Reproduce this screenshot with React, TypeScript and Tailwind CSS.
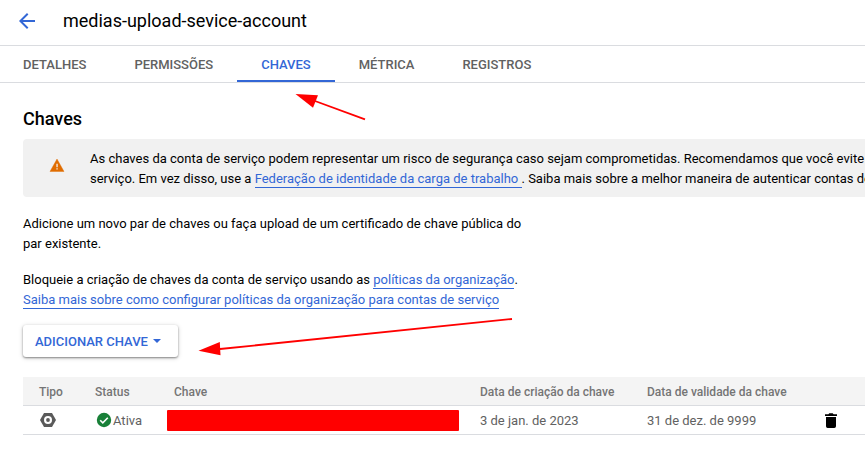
import type { ReactNode } from 'react';

function Link({ children }: { children: ReactNode }) {
  return (
    <a href="#" className="border-b border-[#3367d6] pb-px text-[#3367d6]">
      {children}
    </a>
  );
}

const tabs = ['DETALHES', 'PERMISSÕES', 'CHAVES', 'MÉTRICA', 'REGISTROS'];

function Header() {
  return (
    <header className="flex h-[46px] items-center border-b border-[#dadce0] pb-1 pl-[15px]">
      <svg className="size-6" viewBox="0 0 24 24" fill="#3367d6">
        <path d="M20 11H7.83l5.59-5.59L12 4l-8 8 8 8 1.41-1.41L7.83 13H20z" />
      </svg>
      <h1 className="ml-6 text-[18px] leading-6">medias-upload-sevice-account</h1>
    </header>
  );
}

function Tabs() {
  return (
    <nav className="flex h-[37px] border-b border-[#dadce0] text-[13px] font-medium">
      {tabs.map((t) => (
        <a
          key={t}
          href="#"
          className={
            t === 'CHAVES'
              ? 'flex items-center border-b-2 border-[#3367d6] px-6 pt-1 text-[#3367d6]'
              : 'flex items-center px-6 pt-0.5 text-[#616161] first:pl-[23px]'
          }
        >
          {t}
        </a>
      ))}
    </nav>
  );
}

function Notice() {
  return (
    <div className="flex h-[58px] items-center rounded-l bg-[#f1f1f1]">
      <svg className="ml-[26px] size-4 shrink-0 -translate-y-[3px]" viewBox="0 0 16 16">
        <path d="M1 14.5L8 2l7 12.5z" fill="#e06c00" stroke="#e06c00" strokeWidth="0.4" />
        <path d="M7.4 6.8h1.3v3.4H7.4zM7.4 11.2h1.3v1.3H7.4z" fill="#f1f1f1" />
      </svg>
      <p className="ml-[25px] shrink-0 whitespace-nowrap pt-0.5">
        As chaves da conta de serviço podem representar um risco de segurança caso sejam comprometidas. Recomendamos que você evite
        <br />
        serviço. Em vez disso, use a <Link>Federação de identidade da carga de trabalho&nbsp;</Link>. Saiba mais sobre a melhor
        maneira de autenticar contas de
      </p>
    </div>
  );
}

function KeysTable() {
  const cols = 'grid grid-cols-[56px_79px_306px_167px_1fr] items-center border-b border-[#dadce0] h-[29px] pl-4';
  return (
    <div className="mt-5 text-[#616161]">
      <div className={`${cols} bg-[#f4f4f4] pt-0.5 text-[12px] font-medium text-[#757575]`}>
        <span>Tipo</span>
        <span>Status</span>
        <span>Chave</span>
        <span>Data de criação da chave</span>
        <span>Data de validade da chave</span>
      </div>
      <div className={cols}>
        <svg className="size-[18px]" viewBox="0 0 18 18">
          <path d="M5 2h8l4 7-4 7H5L1 9z" fill="#5a5a5a" />
          <circle cx="9" cy="9" r="4" fill="#fff" />
          <circle cx="9" cy="9" r="1.9" fill="#5a5a5a" />
        </svg>
        <span className="flex items-center">
          <svg className="ml-px mr-px size-4" viewBox="0 0 16 16">
            <circle cx="8" cy="8" r="7.2" fill="#188038" />
            <path d="M4.2 8.3l2.6 2.6 5-5.2" fill="none" stroke="#fff" strokeWidth="1.6" />
          </svg>
          <span className="pt-0.5">Ativa</span>
        </span>
        <span className="-ml-[7px] h-[21px] w-[292px] rounded-[1px] bg-[#ff0000]" />
        <span className="pt-0.5">3 de jan. de 2023</span>
        <span className="flex items-center">
          <span className="w-[175px] pt-0.5">31 de dez. de 9999</span>
          <svg className="size-[18px]" viewBox="0 0 18 18" fill="#000">
            <path d="M4 6h10v9c0 1.1-.7 2-1.7 2H5.7C4.7 17 4 16.1 4 15zM3 3.2h3.4l.9-1h3.4l.9 1H15v1.7H3z" />
          </svg>
        </span>
      </div>
    </div>
  );
}

function Annotations() {
  return (
    <svg className="pointer-events-none absolute left-0 top-0" width="865" height="452" fill="#ff0000" stroke="#ff0000">
      <path d="M365 119.3L315 101" strokeWidth="1.8" />
      <path d="M295.5 94L318 95.2 313 107.7z" stroke="none" />
      <path d="M512 319L220 349" strokeWidth="1.8" />
      <path d="M198.5 350.7L219.8 342 220.5 355.3z" stroke="none" />
    </svg>
  );
}

export default function App() {
  return (
    <div className="relative h-[452px] w-[865px] overflow-hidden bg-white font-[Roboto,sans-serif] text-[13px] leading-5 text-black">
      <Header />
      <Tabs />
      <main className="pl-[23px]">
        <h2 className="pb-2 pt-6 text-[18px] font-medium leading-6">Chaves</h2>
        <Notice />
        <p className="mt-[17px] w-[505px]">
          Adicione um novo par de chaves ou faça upload de um certificado de chave pública do
          <br />
          par existente.
        </p>
        <p className="mt-4">
          Bloqueie a criação de chaves da conta de serviço usando as <Link>políticas da organização</Link>.
          <br />
          <Link>Saiba mais sobre como configurar políticas da organização para contas de serviço</Link>
        </p>
        <button className="mt-[15px] flex h-8 w-[155px] items-center rounded-[3px] bg-white pl-3 font-medium text-[#3367d6] shadow-[0_1px_2px_rgba(0,0,0,0.4),0_1px_5px_rgba(0,0,0,0.18)]">
          <span className="pt-0.5">ADICIONAR CHAVE</span>
          <svg className="ml-[5px]" width="8" height="4" viewBox="0 0 8 4" fill="#3367d6">
            <path d="M0 0h8L4 4z" />
          </svg>
        </button>
        <KeysTable />
      </main>
      <Annotations />
    </div>
  );
}
